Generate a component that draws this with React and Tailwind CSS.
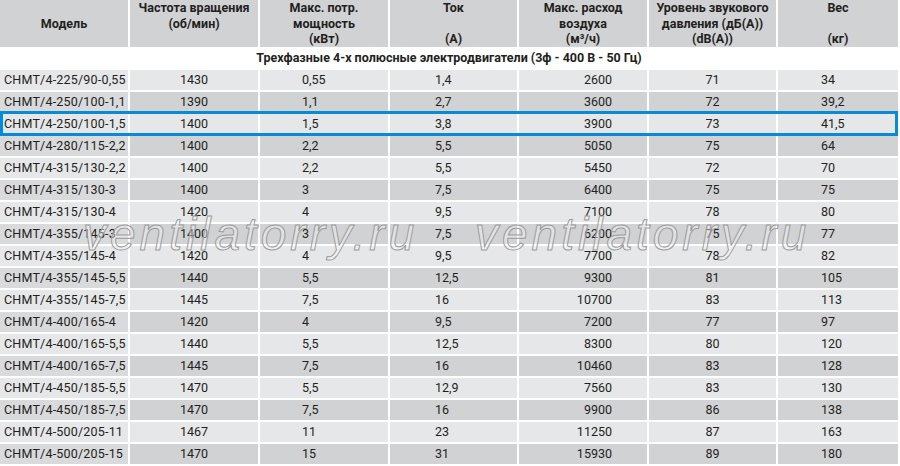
import React from "react";

const rows = [
  ["CHMT/4-225/90-0,55", "1430", "0,55", "1,4", "2600", "71", "34"],
  ["CHMT/4-250/100-1,1", "1390", "1,1", "2,7", "3600", "72", "39,2"],
  ["CHMT/4-250/100-1,5", "1400", "1,5", "3,8", "3900", "73", "41,5"],
  ["CHMT/4-280/115-2,2", "1400", "2,2", "5,5", "5050", "75", "64"],
  ["CHMT/4-315/130-2,2", "1400", "2,2", "5,5", "5450", "72", "70"],
  ["CHMT/4-315/130-3", "1400", "3", "7,5", "6400", "75", "75"],
  ["CHMT/4-315/130-4", "1420", "4", "9,5", "7100", "78", "80"],
  ["CHMT/4-355/145-3", "1400", "3", "7,5", "6200", "75", "77"],
  ["CHMT/4-355/145-4", "1420", "4", "9,5", "7700", "78", "82"],
  ["CHMT/4-355/145-5,5", "1440", "5,5", "12,5", "9300", "81", "105"],
  ["CHMT/4-355/145-7,5", "1445", "7,5", "16", "10700", "83", "113"],
  ["CHMT/4-400/165-4", "1420", "4", "9,5", "7200", "77", "97"],
  ["CHMT/4-400/165-5,5", "1440", "5,5", "12,5", "8300", "80", "120"],
  ["CHMT/4-400/165-7,5", "1445", "7,5", "16", "10460", "83", "128"],
  ["CHMT/4-450/185-5,5", "1470", "5,5", "12,9", "7560", "83", "130"],
  ["CHMT/4-450/185-7,5", "1470", "7,5", "16", "9900", "86", "138"],
  ["CHMT/4-500/205-11", "1467", "11", "23", "11250", "87", "163"],
  ["CHMT/4-500/205-15", "1470", "15", "31", "15930", "89", "180"],
];

const grid =
  "grid grid-cols-[128px_128px_128px_127px_128px_127px_120px] gap-x-[2px]";

// per-column text placement, the source table is not strictly centred
const cellPos = [
  "pl-1 text-left tracking-[0.2px]",
  "text-center",
  "pl-[42px] text-left",
  "pl-[45px] text-left",
  "pr-[35px] text-right",
  "text-center",
  "pl-[43px] text-left",
];

function HeaderCell({ children, center }) {
  return (
    <div
      className={
        "bg-[#d1d2d4] font-bold text-[12.5px] leading-[15.5px] text-center flex flex-col " +
        (center ? "justify-center" : "pt-[0px]")
      }
    >
      {children}
    </div>
  );
}

function Watermark({ className }) {
  return (
    <div
      className={
        "absolute top-[211px] italic text-[46px] leading-none tracking-[4px] text-white/40 [-webkit-text-stroke:1px_#9c9c9c] select-none pointer-events-none " +
        className
      }
      style={{ fontFamily: '"Liberation Sans", Arial, sans-serif' }}
    >
      ventilatorry.ru
    </div>
  );
}

export default function App() {
  return (
    <div
      className="relative w-[900px] h-[466px] bg-white text-[#231f20] overflow-hidden"
      style={{ fontFamily: "Roboto, sans-serif" }}
    >
      <div className="flex flex-col gap-y-[2px] w-[898px]">
        <div className={grid + " h-[46px]"}>
          <HeaderCell center>
            <span>Модель</span>
          </HeaderCell>
          <HeaderCell>
            <span>Частота вращения</span>
            <span>(об/мин)</span>
          </HeaderCell>
          <HeaderCell>
            <span>Макс. потр.</span>
            <span>мощность</span>
            <span>(кВт)</span>
          </HeaderCell>
          <HeaderCell>
            <span>Ток</span>
            <span>&nbsp;</span>
            <span>(А)</span>
          </HeaderCell>
          <HeaderCell>
            <span>Макс. расход</span>
            <span>воздуха</span>
            <span>(м³/ч)</span>
          </HeaderCell>
          <HeaderCell>
            <span>Уровень звукового</span>
            <span>давления (дБ(А))</span>
            <span>(dB(A))</span>
          </HeaderCell>
          <HeaderCell>
            <span>Вес</span>
            <span>&nbsp;</span>
            <span>(кг)</span>
          </HeaderCell>
        </div>

        <div className="h-[20px] flex items-center justify-center font-bold text-[12.5px]">
          Трехфазные 4-х полюсные электродвигатели (3ф - 400 В - 50 Гц)
        </div>

        {rows.map((r, i) => {
          const dark = i % 2 === 1;
          return (
            <div key={r[0]} className={grid + " relative h-[20px]"}>
              {r.map((v, j) => (
                <div
                  key={j}
                  className={
                    "text-[12.5px] leading-[20px] " +
                    cellPos[j] +
                    " " +
                    (dark
                      ? j === 0
                        ? "bg-[#d9dadc]"
                        : "bg-[#d1d2d4]"
                      : "bg-[#e6e7e8]")
                  }
                >
                  {v}
                </div>
              ))}
              {i === 2 && (
                <div className="absolute -top-[3px] -bottom-[2px] left-0 right-0 border-[3px] border-[#0a8ad4] pointer-events-none" />
              )}
            </div>
          );
        })}
      </div>

      <Watermark className="left-[83px]" />
      <Watermark className="left-[475px]" />
    </div>
  );
}
